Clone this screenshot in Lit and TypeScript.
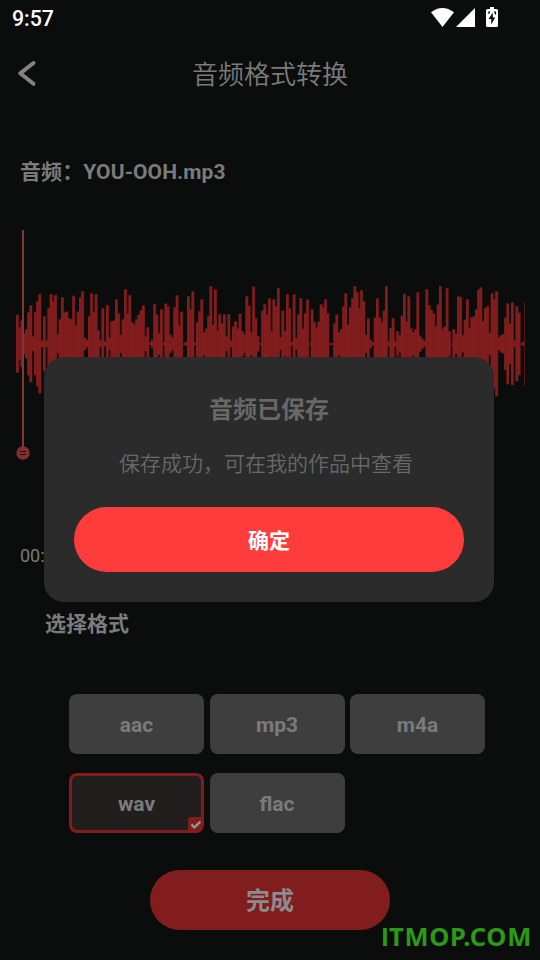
import { LitElement, html, css, svg } from "lit";
import { customElement, property } from "lit/decorators.js";
import { classMap } from "lit/directives/class-map.js";

// Half heights of the waveform bars, in thirds of a pixel, grouped by stretch of the track.
const MID = 356.5;
const HEAD = [
  269, 306, 286, 325, 312, 261, 240, 333, 261, 228, 207, 345, 273, 345, 248, 207, 228, 209, 327, 282, 216, 261, 259, 279,
  282, 212, 300, 259, 216, 198, 337, 345, 273, 204, 261, 207, 315, 345, 249, 348, 240, 337, 288, 286, 222, 264, 328, 282,
  192, 264, 210, 291, 297, 282, 268, 255, 240, 333, 306, 351, 343, 237, 268, 323, 252, 351, 235, 243, 328, 336, 246, 210,
  300,
].map((v) => MID - v);
const REST = [
  124, 219, 215, 78, 117, 63, 216, 156, 123, 87, 186, 175, 138, 48, 163, 57, 180, 132, 160, 132, 198, 132, 210, 169, 153,
  175, 130, 183, 192, 78, 106, 186, 49, 144, 197, 217, 121, 102, 133, 84, 182, 87, 108, 54, 201, 121, 183, 72, 114, 215,
  72, 202, 132, 84, 175, 129, 88, 219, 117, 156, 172, 154, 102, 112, 87, 129, 219, 219, 159, 133, 186, 177, 108, 69, 163,
  111, 84, 48, 66, 114, 60, 93, 193, 144, 208, 216, 142, 84, 142, 155, 121, 48, 213, 174, 144, 211, 183, 195, 136, 71,
  153, 78, 174, 186, 177, 66, 197, 206, 211, 57, 105, 118, 129, 168, 102, 48, 175, 169, 54, 183, 219, 177, 190, 78, 80,
  195, 148, 87, 174, 141, 138, 117, 58, 51, 153, 114, 108, 187, 69, 86, 63, 201, 195, 192, 142, 100, 160, 97, 210, 108,
  127, 219, 214,
].map((v) => MID - 135 - v);
const BARS = [...HEAD, ...REST].map((v) => v / 3);

@customElement("wave-form")
export class WaveForm extends LitElement {
  static styles = css`
    :host { display: block; }
    svg { display: block; width: 540px; height: 240px; }
    .edge { fill: #521617; }
    .bar { fill: #811d1d; }
    .pin { fill: #843636; }
    .knob { fill: #842e2e; }
    .grip { fill: #1a0c0c; }
  `;
  render() {
    const mid = 118.8;
    return html`<svg viewBox="0 0 540 240">
      ${BARS.map((h, i) => svg`<rect class="edge" x=${16 + i * 2.25} y=${mid - h} width="2.95" height=${h * 2}></rect>`)}
      ${BARS.map((h, i) => svg`<rect class="bar" x=${16 + i * 2.25} y=${mid - h + 0.7} width="2.5" height=${Math.max(h * 2 - 1.4, 1)}></rect>`)}
      <rect class="edge" x="524" y="77" width="1" height="84"></rect>
      <rect class="pin" x="22" y="5" width="2" height="218"></rect>
      <circle class="knob" cx="23" cy="228" r="6.7"></circle>
      <rect class="grip" x="20" y="226" width="6" height="1"></rect>
      <rect class="grip" x="20" y="229" width="6" height="1"></rect>
    </svg>`;
  }
}

@customElement("format-option")
export class FormatOption extends LitElement {
  @property() label = "";
  @property({ type: Boolean }) selected = false;
  static styles = css`
    :host { display: block; }
    .tile {
      position: relative; box-sizing: border-box; width: 135px; height: 60px; border-radius: 8px;
      background: #3e3e3e; color: #7b7b7b; display: flex; align-items: center; justify-content: center;
      font: 700 21px/24px Roboto, sans-serif; padding-top: 2px; overflow: hidden;
    }
    .on { background: #231e1e; border: 3px solid #811d1d; padding-top: 2px; }
    .tick { position: absolute; right: -3px; bottom: -3px; width: 16px; height: 16px; }
    .corner { fill: #811d1d; }
    .check { fill: none; stroke: #949494; stroke-width: 2.4; }
  `;
  render() {
    return html`<div class=${classMap({ tile: true, on: this.selected })}>
      ${this.label}
      ${this.selected
        ? html`<svg class="tick" viewBox="0 0 16 16">
            <path class="corner" d="M3 0H16V16H0V3Q0 0 3 0Z"></path>
            <path class="check" d="M3.4 7.3 6.4 10.3 12.4 4.6"></path>
          </svg>`
        : ""}
    </div>`;
  }
}

@customElement("app-root")
export class AppRoot extends LitElement {
  static styles = css`
    :host {
      display: block; position: relative; width: 540px; height: 960px; overflow: hidden; background: #0a0d0c;
      color: #7b7b7b; font-family: Roboto, "Noto Sans CJK SC", sans-serif;
    }
    .page { display: flex; flex-direction: column; }
    .status { height: 36px; display: flex; justify-content: space-between; padding: 0 42px 0 12px; color: #fff; }
    .clock { font: 500 21.3px/38px Roboto, sans-serif; }
    .signals { display: block; width: 68px; height: 36px; }
    .nav { height: 74px; display: grid; grid-template-columns: 60px 1fr 60px; align-items: center; }
    .back { display: block; width: 60px; height: 74px; fill: none; stroke: #838383; stroke-width: 4; stroke-linecap: round; stroke-linejoin: round; }
    .title { text-align: center; font-size: 26px; line-height: 36px; padding-top: 3px; font-weight: 350; }
    .file { margin-top: 46px; height: 32px; padding-left: 20px; font-size: 21px; line-height: 32px; font-weight: 700; letter-spacing: 0.1px; }
    .wave { margin-top: 37px; }
    .time { margin-top: 79px; padding-left: 20px; height: 24px; font-size: 18px; line-height: 24px; }
    .choose { margin-top: 40px; padding-left: 45px; height: 32px; font-size: 21px; line-height: 32px; font-weight: 700; }
    .options { margin: 54px 0 0 69px; display: grid; grid-template-columns: repeat(3, 135px); gap: 19px 5.5px; }
    .done {
      margin: 37px 0 0 150px; width: 240px; height: 60px; border-radius: 30px; background: #811d1d; color: #8c8c8c;
      display: flex; align-items: center; justify-content: center; font-size: 24px; font-weight: 700;
      box-sizing: border-box; padding-bottom: 4px;
    }
    .dialog {
      position: absolute; left: 44px; top: 357px; width: 450px; height: 245px; box-sizing: border-box;
      border-radius: 20px; background: #2b2b2b; padding: 35px 30px 30px; color: #686868;
      display: flex; flex-direction: column; align-items: center;
    }
    .head { font-size: 24px; line-height: 36px; font-weight: 700; }
    .msg { margin: 20px 6px 0 0; font-size: 21px; line-height: 32px; white-space: nowrap; font-weight: 350; }
    .ok {
      margin-top: auto; width: 390px; height: 65px; border-radius: 33px; background: #ff3c3c; color: #fff;
      display: flex; align-items: center; justify-content: center; font-size: 21px; font-weight: 700;
      box-sizing: border-box; padding-bottom: 2px;
    }
    .mark { position: absolute; right: 8px; bottom: 5px; color: #2a9a17; font: 700 25.5px/36px "Noto Sans", sans-serif; letter-spacing: 0.7px; }
    .plain { font-family: Inter, sans-serif; font-size: 24.5px; }
  `;

  render() {
    return html`
      <div class="page">
        <div class="status">
          <span class="clock">9:57</span>
          <svg class="signals" viewBox="430 0 68 36" fill="#fff">
            <path d="M431 12.3Q442.4 3.5 454 12.3L442.5 27Z"></path>
            <path d="M475 8V27H456Z"></path>
            <path d="M488.5 9H490V7H494V9H496.5Q498 9 498 10.5V25.5Q498 27 496.5 27H487.5Q486 27 486 25.5V10.5Q486 9 487.5 9Z"></path>
            <path d="M492.8 12.5 488.6 19H491.2V24.5L495.2 17.5H492.8Z" fill="#0a0d0c"></path>
            <path d="M488.3 11.5H490.5L489 14H488.3ZM494 11.5H496V14.5H495Z" fill="#0a0d0c"></path>
          </svg>
        </div>
        <div class="nav">
          <svg class="back" viewBox="0 36 60 74"><path d="M33.5 63 20.2 73.3 33.5 83.8"></path></svg>
          <div class="title">音频格式转换</div>
        </div>
        <div class="file">音频：YOU-OOH.mp3</div>
        <wave-form class="wave"></wave-form>
        <div class="time">00:00</div>
        <div class="choose">选择格式</div>
        <div class="options">
          ${["aac", "mp3", "m4a", "wav", "flac"].map(
            (f) => html`<format-option .label=${f} .selected=${f === "wav"}></format-option>`,
          )}
        </div>
        <div class="done">完成</div>
      </div>
      <div class="dialog">
        <div class="head">音频已保存</div>
        <div class="msg">保存成功，可在我的作品中查看</div>
        <div class="ok">确定</div>
      </div>
      <div class="mark"><span class="plain">I</span>TMOP.COM</div>
    `;
  }
}
